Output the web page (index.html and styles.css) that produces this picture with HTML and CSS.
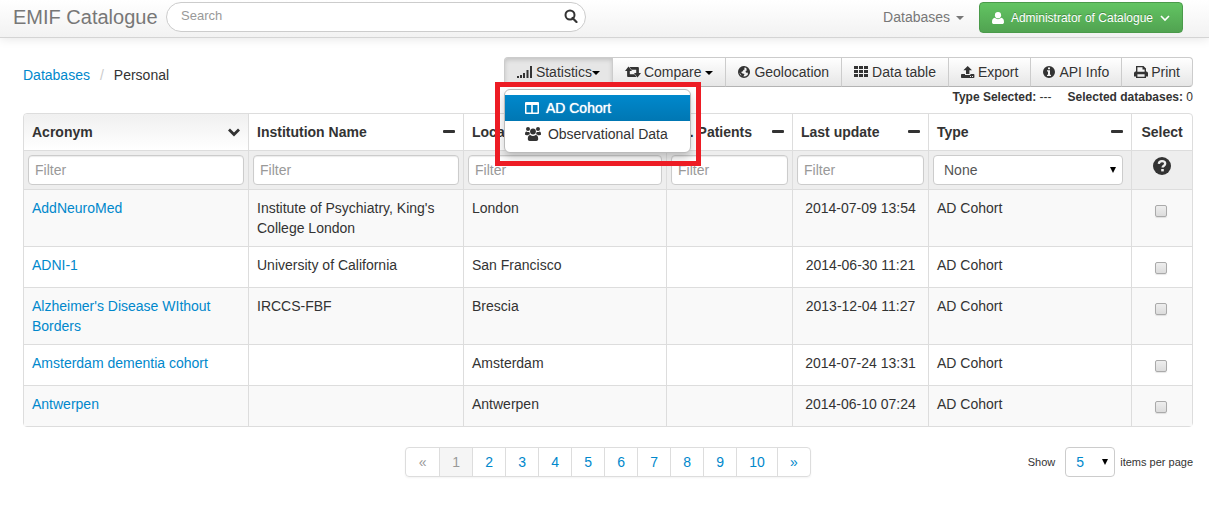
FILE: index.html
```
<!DOCTYPE html>
<html lang="en">
<head>
<meta charset="utf-8">
<title>EMIF Catalogue</title>
<link rel="stylesheet" href="styles.css">
</head>
<body>
<svg class="defs" aria-hidden="true">
  <symbol id="minus" viewBox="0 0 12 12"><rect x="0" y="4" width="12" height="3" rx="1"/></symbol>
  <symbol id="caret" viewBox="0 0 8 4"><path d="M0 0h8L4 4z"/></symbol>
  <symbol id="arrow" viewBox="0 0 6 6"><path d="M0 0h6L3 6z"/></symbol>
</svg>
<header class="navbar">
  <a class="brand" href="#">EMIF Catalogue</a>
  <form class="search">
    <input class="search-input" type="text" placeholder="Search" aria-label="Search">
    <button class="search-button" type="button" aria-label="Run search">
      <svg class="icon" viewBox="0 0 14 14"><circle cx="6" cy="6" r="4.5" fill="none" stroke="currentColor" stroke-width="2"/><path d="M8.500 9l4 4" stroke="currentColor" stroke-width="2.200" stroke-linecap="round"/></svg>
    </button>
  </form>
  <nav class="nav-right">
    <a class="nav-link" href="#">Databases <svg class="caret"><use href="#caret"/></svg></a>
    <button class="user-button" type="button">
      <svg class="user-icon" viewBox="0 0 12 12"><circle cx="6" cy="3.200" r="3.100"/><path d="M0 10.200C0 7.500 1 6 2.800 5.800a4.300 4.300 0 0 0 6.400 0C11 6 12 7.500 12 10.200c0 1.200-.8 1.800-1.800 1.800H1.800C.8 12 0 11.400 0 10.200z"/></svg>
      Administrator of Catalogue
      <svg class="user-chevron" viewBox="0 0 10 10"><path d="M1 3l4 4 4-4" fill="none" stroke="currentColor" stroke-width="1.600"/></svg>
    </button>
  </nav>
</header>

<main class="page">
  <div class="top">
    <nav class="breadcrumb" aria-label="Breadcrumb">
      <a href="#">Databases</a><span class="divider">/</span><span>Personal</span>
    </nav>
    <div class="actions">
      <div class="toolbar">
        <div class="dropdown">
          <button class="tool active" type="button" aria-expanded="true">
            <svg class="icon wide" viewBox="0 0 16 14"><path d="M0 11h2v2H0zM3 10h2v3H3zM6 8h2v5H6zM9.500 5h2v8h-2zM13 1h2v12h-2z"/></svg>
            <span>Statistics<svg class="caret"><use href="#caret"/></svg></span>
          </button>
          <div class="menu">
            <a class="menu-item selected" href="#">
              <svg class="icon" viewBox="0 0 14 14"><path fill-rule="evenodd" d="M1 1h12a1 1 0 0 1 1 1v10a1 1 0 0 1-1 1H1a1 1 0 0 1-1-1V2a1 1 0 0 1 1-1zM1.500 4v7.500h4.700V4zM7.800 4v7.500h4.700V4z"/></svg>
              AD Cohort
            </a>
            <a class="menu-item" href="#">
              <svg class="icon wide" viewBox="0 0 16 14"><circle cx="3" cy="2" r="2"/><circle cx="13" cy="2" r="2"/><circle cx="8" cy="4.500" r="2.900"/><path d="M0 7.300C0 5.500.5 4.500 1.500 4.500c.8.600 1.900.7 2.900.4 0 1 .3 1.700.8 2.300-1 0-1.700.4-2.200 1H1.500C.6 8.200 0 8 0 7.300zM16 7.300c0-1.800-.5-2.800-1.500-2.800-.8.600-1.900.7-2.900.4 0 1-.3 1.700-.8 2.300 1 0 1.700.4 2.200 1h1.500c.9 0 1.500-.2 1.500-.9zM2.800 12c0-2.500.9-4 2.500-4a4.300 4.300 0 0 0 5.400 0c1.600 0 2.500 1.500 2.500 4 0 1.300-.8 2-1.900 2H4.700c-1.100 0-1.900-.7-1.900-2z"/></svg>
              Observational Data
            </a>
          </div>
          <div class="highlight"></div>
        </div>
        <button class="tool" type="button">
          <svg class="icon wide" viewBox="0 0 16 14"><path d="M3.500 1.500L7 6H4.800v3.300H9.500l2 2.700H3a.9.900 0 0 1-.9-.9V6H0zM12.500 12.500L9 8h2.200V4.700H6.500L4.500 2H13c.5 0 .9.400.9.900V8H16z"/></svg>
          <span>Compare <svg class="caret"><use href="#caret"/></svg></span>
        </button>
        <button class="tool" type="button">
          <svg class="icon small" viewBox="0 0 12 12"><circle cx="6" cy="6" r="5.300" fill="none" stroke="currentColor" stroke-width="1.400"/><path d="M.8 4L3.500.8 7 .6 6 2.200l1 .8-1.500 1L4.500 5.500 3 6l1.500 1.500L6.500 8 5.200 11 3.500 10.800 3 8.500 1 6.500zM9 1.500L11.500 5l-.3 3-1 .5-.7-2-1.500.3L7.500 5l1.500-.8-.7-1.200z"/></svg>
          Geolocation
        </button>
        <button class="tool" type="button">
          <svg class="icon grid" viewBox="0 0 15 14"><path d="M0 1h4v3H0zM5 1h4v3H5zM10 1h4v3h-4zM0 5h4v3H0zM5 5h4v3H5zM10 5h4v3h-4zM0 9h4v3H0zM5 9h4v3H5zM10 9h4v3h-4z"/></svg>
          Data table
        </button>
        <button class="tool" type="button">
          <svg class="icon" viewBox="0 0 14 14"><path fill-rule="evenodd" d="M6.700 1L11 5.300H8.400V9H5V5.300H2.400zM.8 9H4v1h5.400V9h3.200c.4 0 .8.300.8.800v2.400c0 .4-.4.800-.8.800H.8a.8.800 0 0 1-.8-.8V9.800C0 9.300.4 9 .8 9zM9 11v1h1v-1zm2 0v1h1v-1z"/></svg>
          Export
        </button>
        <button class="tool" type="button">
          <svg class="icon small" viewBox="0 0 12 12"><path fill-rule="evenodd" d="M6 0a6 6 0 1 1 0 12A6 6 0 0 1 6 0zM5 1.500v1.800h2V1.500zM4 4.300v1.200h1v3.300H4V10h4V8.800H7V4.300z"/></svg>
          API Info
        </button>
        <button class="tool" type="button">
          <svg class="icon" viewBox="0 0 14 14"><path fill-rule="evenodd" d="M2 1h7.500L12 3.500v3c1 0 2 .6 2 1.800v3.200h-2V13H2v-1.500H0V8.300c0-1.200 1-1.800 2-1.800zM3.400 2.300v4.400h7.200V4.500H8.500V2.300zM3.400 9.300v2.400h7.200V9.300z"/></svg>
          Print
        </button>
      </div>
      <div class="status">
        <span><b>Type Selected:</b> ---</span>
        <span><b>Selected databases:</b> 0</span>
      </div>
    </div>
  </div>

  <table class="databases">
    <colgroup>
      <col class="c-acronym"><col class="c-institution"><col class="c-location"><col class="c-patients"><col class="c-update"><col class="c-type"><col class="c-select">
    </colgroup>
    <thead>
      <tr class="heads">
        <th class="sorted"><div class="head">Acronym<svg class="sort" viewBox="0 0 12 12"><path d="M1 3.500l5 5 5-5" fill="none" stroke="currentColor" stroke-width="2.800"/></svg></div></th>
        <th><div class="head">Institution Name<svg class="sort"><use href="#minus"/></svg></div></th>
        <th><div class="head">Location<svg class="sort"><use href="#minus"/></svg></div></th>
        <th><div class="head">Nr. Patients<svg class="sort"><use href="#minus"/></svg></div></th>
        <th><div class="head">Last update<svg class="sort"><use href="#minus"/></svg></div></th>
        <th><div class="head">Type<svg class="sort"><use href="#minus"/></svg></div></th>
        <th class="center">Select</th>
      </tr>
      <tr class="filters">
        <td><input class="filter" type="text" placeholder="Filter" aria-label="Filter by acronym"></td>
        <td><input class="filter" type="text" placeholder="Filter" aria-label="Filter by institution"></td>
        <td><input class="filter" type="text" placeholder="Filter" aria-label="Filter by location"></td>
        <td><input class="filter" type="text" placeholder="Filter" aria-label="Filter by patients"></td>
        <td><input class="filter" type="text" placeholder="Filter" aria-label="Filter by last update"></td>
        <td><div class="select type-select"><select aria-label="Filter by type"><option>None</option><option>AD Cohort</option><option>Observational Data</option></select><svg class="arrow"><use href="#arrow"/></svg></div></td>
        <td class="help"><svg class="help-icon" viewBox="0 0 18 18" role="img" aria-label="Help"><circle cx="9" cy="9" r="9"/><path d="M5.800 6.800C6 5 7.300 4.200 9 4.200c1.900 0 3.200 1 3.200 2.500 0 2-2.600 2-2.600 3.900" fill="none" stroke="#eee" stroke-width="2.300"/><rect x="8.200" y="12" width="2.600" height="2.400" fill="#eee"/></svg></td>
      </tr>
    </thead>
    <tbody>
      <tr><td><a href="#">AddNeuroMed</a></td><td>Institute of Psychiatry, King's College London</td><td>London</td><td></td><td class="center">2014-07-09 13:54</td><td>AD Cohort</td><td class="check"><input type="checkbox" aria-label="Select AddNeuroMed"></td></tr>
      <tr><td><a href="#">ADNI-1</a></td><td>University of California</td><td>San Francisco</td><td></td><td class="center">2014-06-30 11:21</td><td>AD Cohort</td><td class="check"><input type="checkbox" aria-label="Select ADNI-1"></td></tr>
      <tr><td><a href="#">Alzheimer's Disease WIthout Borders</a></td><td>IRCCS-FBF</td><td>Brescia</td><td></td><td class="center">2013-12-04 11:27</td><td>AD Cohort</td><td class="check"><input type="checkbox" aria-label="Select Alzheimer's Disease WIthout Borders"></td></tr>
      <tr><td><a href="#">Amsterdam dementia cohort</a></td><td></td><td>Amsterdam</td><td></td><td class="center">2014-07-24 13:31</td><td>AD Cohort</td><td class="check"><input type="checkbox" aria-label="Select Amsterdam dementia cohort"></td></tr>
      <tr><td><a href="#">Antwerpen</a></td><td></td><td>Antwerpen</td><td></td><td class="center">2014-06-10 07:24</td><td>AD Cohort</td><td class="check"><input type="checkbox" aria-label="Select Antwerpen"></td></tr>
    </tbody>
  </table>

  <footer class="footer">
    <nav class="pagination" aria-label="Pages">
      <a class="disabled" href="#">«</a><a class="current" href="#">1</a><a href="#">2</a><a href="#">3</a><a href="#">4</a><a href="#">5</a><a href="#">6</a><a href="#">7</a><a href="#">8</a><a href="#">9</a><a href="#">10</a><a href="#">»</a>
    </nav>
    <div class="per-page">
      <label for="per-page">Show</label>
      <div class="select count-select"><select id="per-page"><option>5</option><option>10</option></select><svg class="arrow"><use href="#arrow"/></svg></div>
      <span>items per page</span>
    </div>
  </footer>
</main>
</body>
</html>
```
FILE: styles.css
```
* { box-sizing: border-box; }
body {
  margin: 0;
  background: #fff;
  color: #333;
  font: 14px/20px "Liberation Sans", Arial, sans-serif;
}
a { color: #08c; text-decoration: none; }
button, input, select { font: inherit; color: inherit; }
svg { fill: currentColor; }
.defs { position: absolute; width: 0; height: 0; }
.icon { width: 14px; height: 14px; flex: none; }
.icon.wide { width: 16px; }
.icon.grid { width: 15px; }
.icon.small { width: 12px; height: 12px; }
.caret { width: 8px; height: 4px; vertical-align: middle; }

.navbar {
  display: flex;
  align-items: flex-start;
  height: 38px;
  padding: 2px 26px 0 13px;
  background: linear-gradient(#fff, #f2f2f2);
  border-bottom: 1px solid #d4d4d4;
  box-shadow: 0 1px 10px rgba(0, 0, 0, 0.1);
}
.brand {
  width: 153px;
  padding-top: 5px;
  font-size: 20px;
  color: #777;
  white-space: nowrap;
}
.search { position: relative; width: 420px; }
.search-input {
  display: block;
  width: 100%;
  height: 30px;
  padding: 0 40px 3px 14px;
  border: 1px solid #ccc;
  border-radius: 15px;
  background: #fff;
  font-size: 13px;
}
.search-input::placeholder, .filter::placeholder { color: #999; opacity: 1; }
.search-button {
  position: absolute;
  top: 7px;
  right: 8px;
  display: flex;
  padding: 0;
  border: 0;
  background: none;
}
.nav-right { display: flex; gap: 15px; margin-left: auto; }
.nav-link { padding-top: 5px; color: #777; }
.nav-link .caret { margin-left: 2px; }
.user-button {
  display: flex;
  align-items: center;
  gap: 7px;
  height: 31px;
  padding: 0 12px;
  border: 1px solid #4a9a4a;
  border-radius: 4px;
  background: linear-gradient(#62c462, #51a351);
  color: #fff;
  font-size: 12px;
  text-shadow: 0 -1px 0 rgba(0, 0, 0, 0.25);
  white-space: nowrap;
}
.user-icon { width: 12px; height: 12px; }
.user-chevron { width: 10px; height: 10px; }

.page { padding: 19px 16px 20px 23px; }
.top { display: flex; justify-content: space-between; }
.breadcrumb { padding-top: 8px; }
.divider { padding: 0 10px; color: #ccc; }
.toolbar { display: flex; }
.dropdown { position: relative; }
.tool {
  display: flex;
  align-items: center;
  gap: 3px;
  height: 30px;
  padding: 0 12px;
  border: 1px solid #ccc;
  border-bottom-color: #b3b3b3;
  border-left-width: 0;
  background: linear-gradient(#fff, #e6e6e6);
  text-shadow: 0 1px 1px rgba(255, 255, 255, 0.75);
  white-space: nowrap;
}
.tool .caret { color: #000; }
.tool .small { margin-right: 1px; }
.tool:last-child { border-radius: 0 4px 4px 0; }
.dropdown .tool {
  border-left-width: 1px;
  border-radius: 4px 0 0 4px;
}
.tool.active {
  background: #e6e6e6;
  box-shadow: inset 0 2px 4px rgba(0, 0, 0, 0.15);
}
.menu {
  position: absolute;
  top: 32px;
  left: 0;
  z-index: 2;
  width: 187px;
  padding: 5px 0;
  border: 1px solid #bbb;
  border-radius: 6px;
  background: #fff;
  box-shadow: 0 5px 10px rgba(0, 0, 0, 0.2);
}
.menu-item {
  display: flex;
  align-items: center;
  gap: 7px;
  padding: 3px 20px;
  color: #333;
  white-space: nowrap;
}
.menu-item.selected {
  background: linear-gradient(#08c, #0077b3);
  color: #fff;
  text-shadow: 0 0 1px #fff;
}
.highlight {
  position: absolute;
  top: 25px;
  left: -9px;
  z-index: 3;
  width: 206px;
  height: 84px;
  border: 5px solid #ed1c24;
  pointer-events: none;
}
.status {
  display: flex;
  justify-content: flex-end;
  gap: 16px;
  font-size: 12px;
}

.databases {
  width: 100%;
  margin-top: 6px;
  table-layout: fixed;
  border: 1px solid #ddd;
  border-radius: 4px;
  border-spacing: 0;
}
.c-acronym { width: 224px; }
.c-institution { width: 215px; }
.c-location { width: 203px; }
.c-patients { width: 126px; }
.c-update { width: 136px; }
.c-type { width: 203px; }
.c-select { width: 61px; }
.databases th, .databases td {
  padding: 8px;
  border-left: 1px solid #ddd;
  text-align: left;
  vertical-align: top;
}
.databases td { border-top: 1px solid #ddd; }
.databases th:first-child, .databases td:first-child { border-left: 0; }
.databases .sorted { background: linear-gradient(#f0f0f0, #fff); border-top-left-radius: 4px; }
.databases .center { text-align: center; white-space: nowrap; }
.head {
  display: flex;
  align-items: center;
  justify-content: space-between;
  white-space: nowrap;
}
.sort { width: 12px; height: 12px; }
.databases .filters td { padding: 4px; background: #eee; }
.databases .filters .help { padding-top: 6px; text-align: center; }
.help-icon { width: 18px; height: 18px; }
.filter, .select select {
  display: block;
  width: 100%;
  height: 30px;
  padding: 0 6px;
  border: 1px solid #ccc;
  border-radius: 4px;
  background: #fff;
}
.filter { box-shadow: inset 0 1px 1px rgba(0, 0, 0, 0.08); }
.select { position: relative; color: #555; }
.select select { appearance: none; padding-left: 10px; }
.arrow {
  position: absolute;
  top: 12px;
  right: 7px;
  width: 6px;
  height: 6px;
  color: #000;
  pointer-events: none;
}
.type-select { margin-right: 4px; }
tbody tr:nth-child(odd) { background: #f9f9f9; }
tbody tr { height: 41px; }
.databases .check { padding: 15px 2px 0 0; }
.check input {
  appearance: none;
  display: block;
  width: 12px;
  height: 12px;
  margin: 0 auto;
  border: 1px solid #aaa;
  border-radius: 2px;
  background: linear-gradient(#eee, #dcdcdc);
  box-shadow: 0 1px 1px rgba(0, 0, 0, 0.1);
}

.footer {
  display: grid;
  grid-template-columns: 1fr auto 1fr;
  margin-top: 20px;
}
.pagination {
  display: flex;
  grid-column: 2;
  border: 1px solid #ddd;
  border-radius: 4px;
  box-shadow: 0 1px 2px rgba(0, 0, 0, 0.05);
}
.pagination a {
  min-width: 33px;
  padding: 4px 12px;
  border-left: 1px solid #ddd;
  text-align: center;
}
.pagination a:first-child { border-left: 0; }
.pagination .disabled, .pagination .current { color: #999; }
.pagination .current { background: #f5f5f5; }
.per-page {
  display: flex;
  align-items: center;
  justify-content: flex-end;
  gap: 5px;
  font-size: 11px;
}
.per-page label { margin-right: 5px; }
.count-select { width: 50px; font-size: 14px; color: #08c; }
```
